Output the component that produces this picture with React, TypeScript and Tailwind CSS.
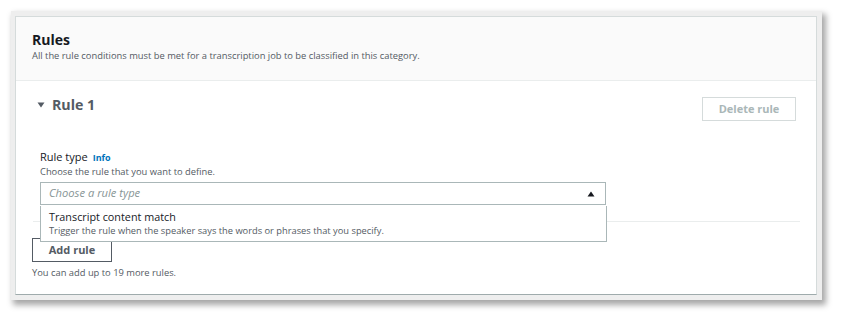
import { useState } from "react";

const FONT = "font-['Open_Sans','Noto_Sans',Arial,sans-serif]";

function CaretDown() {
  return (
    <svg width="8" height="6" viewBox="0 0 8 6" className="shrink-0">
      <path d="M0.5 0.5 L7.5 0.5 L4 5.5 Z" fill="#545b64" />
    </svg>
  );
}

function CaretUp() {
  return (
    <svg width="8" height="6" viewBox="0 0 8 6" className="shrink-0">
      <path d="M0.5 5.5 L7.5 5.5 L4 0.5 Z" fill="#16191f" />
    </svg>
  );
}

export default function App() {
  const [open, setOpen] = useState(true);

  return (
    <div className={`w-[842px] h-[319px] bg-white pl-[11px] pt-[11px] ${FONT}`}>
      {/* outer frame around the panel */}
      <div className="w-[811px] h-[289px] bg-[#eeeeee] pl-[4px] pr-[5px] pt-[5px] pb-[5px] shadow-[3px_4px_6px_1px_rgba(0,0,0,0.35)]">
        <div className="w-[802px] h-[279px] bg-white border border-[#d5dbdb] border-b-[#9fabac] flex flex-col">
          {/* header */}
          <div className="h-[64px] bg-[#fafafa] border-b border-[#eaeded] px-[16px] pt-[14px]">
            <h2 className="text-[14px] leading-[18px] font-bold text-[#16191f]">Rules</h2>
            <p className="text-[9.35px] leading-[14px] text-[#545b64]">
              All the rule conditions must be met for a transcription job to be classified in this category.
            </p>
          </div>

          {/* body */}
          <div className="pl-[16px] pr-[20px] pt-[16px]">
            <div className="flex items-start justify-between h-[24px]">
              <button className="flex items-center gap-[7px] pl-[5px] h-[15px]" onClick={() => setOpen(!open)}>
                <CaretDown />
                <span className="text-[14.2px] leading-[15px] font-bold text-[#545b64]">Rule 1</span>
              </button>
              <button className="w-[94px] h-[24px] border border-[#d5dbdb] text-[11px] font-bold text-[#aab7b8]">
                Delete rule
              </button>
            </div>

            <div className="pl-[8px] mt-[29px]">
              <div className="flex items-baseline gap-[5px] leading-[14px]">
                <span className="text-[11px] text-[#16191f]">Rule type</span>
                <span className="text-[9px] font-bold text-[#0073bb]">Info</span>
              </div>
              <p className="text-[9.35px] leading-[13px] text-[#545b64]">Choose the rule that you want to define.</p>

              <div className="relative mt-[4px] w-[566px]">
                <div className="h-[23px] border border-[#aab7b8] flex items-center justify-between pl-[8px] pr-[10px]">
                  <span className="text-[11.2px] italic text-[#879596]">Choose a rule type</span>
                  <CaretUp />
                </div>
                {open && (
                  <div className="absolute left-0 top-[24px] w-[567px] h-[36px] bg-white border border-t-0 border-[#aab7b8] z-10 pl-[8px] pt-[3px]">
                    <div className="text-[10.8px] leading-[15px] text-[#16191f]">Transcript content match</div>
                    <div className="text-[9.3px] leading-[13px] text-[#545b64]">
                      Trigger the rule when the speaker says the words or phrases that you specify.
                    </div>
                  </div>
                )}
              </div>
            </div>

            <div className="mt-[16px] h-px bg-[#eaeded] ml-px -mr-[4px]" />

            <button className="mt-[16px] w-[80px] h-[24px] border border-[#545b64] text-[11px] font-bold text-[#545b64]">
              Add rule
            </button>
            <p className="mt-[4px] text-[9.35px] leading-[14px] text-[#545b64]">You can add up to 19 more rules.</p>
          </div>
        </div>
      </div>
    </div>
  );
}
